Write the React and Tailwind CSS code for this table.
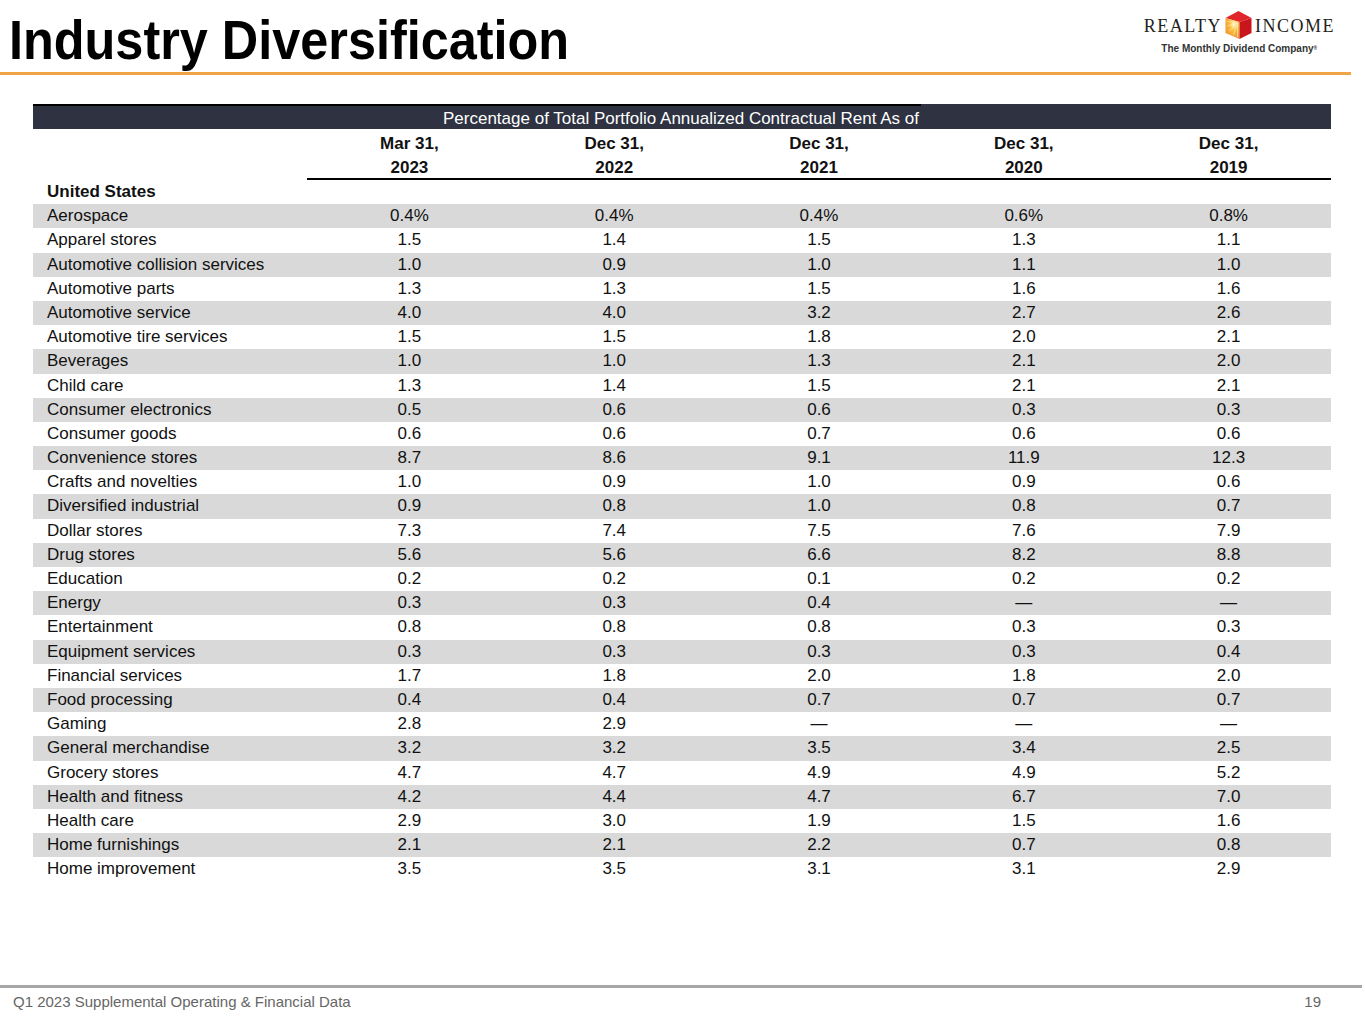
import React from 'react';

const rows = [
    ['Aerospace', '0.4%', '0.4%', '0.4%', '0.6%', '0.8%'],
    ['Apparel stores', '1.5', '1.4', '1.5', '1.3', '1.1'],
    ['Automotive collision services', '1.0', '0.9', '1.0', '1.1', '1.0'],
    ['Automotive parts', '1.3', '1.3', '1.5', '1.6', '1.6'],
    ['Automotive service', '4.0', '4.0', '3.2', '2.7', '2.6'],
    ['Automotive tire services', '1.5', '1.5', '1.8', '2.0', '2.1'],
    ['Beverages', '1.0', '1.0', '1.3', '2.1', '2.0'],
    ['Child care', '1.3', '1.4', '1.5', '2.1', '2.1'],
    ['Consumer electronics', '0.5', '0.6', '0.6', '0.3', '0.3'],
    ['Consumer goods', '0.6', '0.6', '0.7', '0.6', '0.6'],
    ['Convenience stores', '8.7', '8.6', '9.1', '11.9', '12.3'],
    ['Crafts and novelties', '1.0', '0.9', '1.0', '0.9', '0.6'],
    ['Diversified industrial', '0.9', '0.8', '1.0', '0.8', '0.7'],
    ['Dollar stores', '7.3', '7.4', '7.5', '7.6', '7.9'],
    ['Drug stores', '5.6', '5.6', '6.6', '8.2', '8.8'],
    ['Education', '0.2', '0.2', '0.1', '0.2', '0.2'],
    ['Energy', '0.3', '0.3', '0.4', '—', '—'],
    ['Entertainment', '0.8', '0.8', '0.8', '0.3', '0.3'],
    ['Equipment services', '0.3', '0.3', '0.3', '0.3', '0.4'],
    ['Financial services', '1.7', '1.8', '2.0', '1.8', '2.0'],
    ['Food processing', '0.4', '0.4', '0.7', '0.7', '0.7'],
    ['Gaming', '2.8', '2.9', '—', '—', '—'],
    ['General merchandise', '3.2', '3.2', '3.5', '3.4', '2.5'],
    ['Grocery stores', '4.7', '4.7', '4.9', '4.9', '5.2'],
    ['Health and fitness', '4.2', '4.4', '4.7', '6.7', '7.0'],
    ['Health care', '2.9', '3.0', '1.9', '1.5', '1.6'],
    ['Home furnishings', '2.1', '2.1', '2.2', '0.7', '0.8'],
    ['Home improvement', '3.5', '3.5', '3.1', '3.1', '2.9'],
];

const dates = [
    ['Mar 31,', '2023'],
    ['Dec 31,', '2022'],
    ['Dec 31,', '2021'],
    ['Dec 31,', '2020'],
    ['Dec 31,', '2019'],
];

const LogoMark = () => (
    <svg width="31" height="30" viewBox="0 0 30 30">
        <defs>
            <radialGradient id="sun" cx="0.6" cy="0.3" r="0.95">
                <stop offset="0" stopColor="#fff6d0" />
                <stop offset="0.3" stopColor="#fbbf3c" />
                <stop offset="1" stopColor="#ea7a2b" />
            </radialGradient>
        </defs>
        {/* roof */}
        <polygon points="15,1 28,8 16,12 2,8" fill="#e2242b" />
        {/* left face */}
        <polygon points="2,8 16,12 16,29 2,23" fill="url(#sun)" />
        <g stroke="#fff6d8" strokeWidth="0.7" opacity="0.75">
            <line x1="14" y1="13" x2="3" y2="11" />
            <line x1="14" y1="13" x2="4" y2="16" />
            <line x1="14" y1="13" x2="6" y2="21" />
            <line x1="14" y1="13" x2="10" y2="25" />
            <line x1="14" y1="13" x2="14" y2="27" />
        </g>
        {/* right face */}
        <polygon points="16,12 28,8 28,23 16,29" fill="#c9161d" />
    </svg>
);

const Logo = () => (
    <div className="flex flex-col items-center pr-[30px] pt-[12px]">
        <div className="flex items-center">
            <span className="font-['Liberation_Serif',serif] text-[18px] tracking-[1.5px] text-[#231f20] leading-none">REALTY</span>
            <span className="mx-[1px] -mt-[2px]"><LogoMark /></span>
            <span className="font-['Liberation_Serif',serif] text-[18px] tracking-[1.5px] text-[#231f20] leading-none">INCOME</span>
        </div>
        <div className="mt-[4px] text-[10px] font-semibold text-[#333] leading-none">
            The Monthly Dividend Company<sup className="text-[5px]">®</sup>
        </div>
    </div>
);

export default function App() {
    return (
        <div className="w-[1365px] h-[1024px] bg-white flex flex-col font-['Liberation_Sans',Arial,sans-serif] text-[#111] overflow-hidden">
            {/* Title bar */}
            <div className="h-[72px] flex justify-between">
                <h1 className="pl-[10px] pt-[12px] text-[56px] leading-none font-bold text-black whitespace-nowrap origin-left scale-x-[0.9]">
                    Industry Diversification
                </h1>
                <Logo />
            </div>
            <div className="h-[3px] w-[1351px] bg-[#f0a445]" />

            {/* Table */}
            <div className="ml-[33px] mt-[29px] w-[1298px] text-[17px]">
                <div className="flex h-[25px] text-white">
                    <div className="w-[888px] bg-[#2e3241] border-t-2 border-black pl-[410px] pt-[3px] leading-[20px] whitespace-nowrap">
                        Percentage of Total Portfolio Annualized Contractual Rent As of
                    </div>
                    <div className="flex-1 bg-[#2e3241] border-t-2 border-[#2e3241]" />
                </div>

                <div className="grid grid-cols-[274px_repeat(5,1fr)] font-bold mt-[2px]">
                    <div />
                    {dates.map((d, i) => (
                        <div key={i} className="flex flex-col items-center border-b-2 border-black">
                            <div className="h-[24px] leading-[26px]">{d[0]}</div>
                            <div className="h-[23px] leading-[25px]">{d[1]}</div>
                        </div>
                    ))}
                </div>

                <div className="h-[24.2px] leading-[23px] pl-[14px] font-bold">United States</div>

                {rows.map((r, i) => (
                    <div
                        key={r[0]}
                        className={`grid grid-cols-[274px_repeat(5,1fr)] h-[24.2px] leading-[23px] ${i % 2 === 0 ? 'bg-[#d9d9d9]' : 'bg-white'}`}
                    >
                        <div className="pl-[14px]">{r[0]}</div>
                        {r.slice(1).map((v, j) => (
                            <div key={j} className="text-center">{v}</div>
                        ))}
                    </div>
                ))}
            </div>

            <div className="flex-1" />

            {/* Footer */}
            <div className="h-[3px] w-[1362px] bg-[#a6a6a6] mb-[6px]" />
            <div className="h-[30px] flex justify-between text-[15px] text-[#666] pl-[13px] pr-[44px] leading-[15px]">
                <span>Q1 2023 Supplemental Operating &amp; Financial Data</span>
                <span>19</span>
            </div>
        </div>
    );
}
